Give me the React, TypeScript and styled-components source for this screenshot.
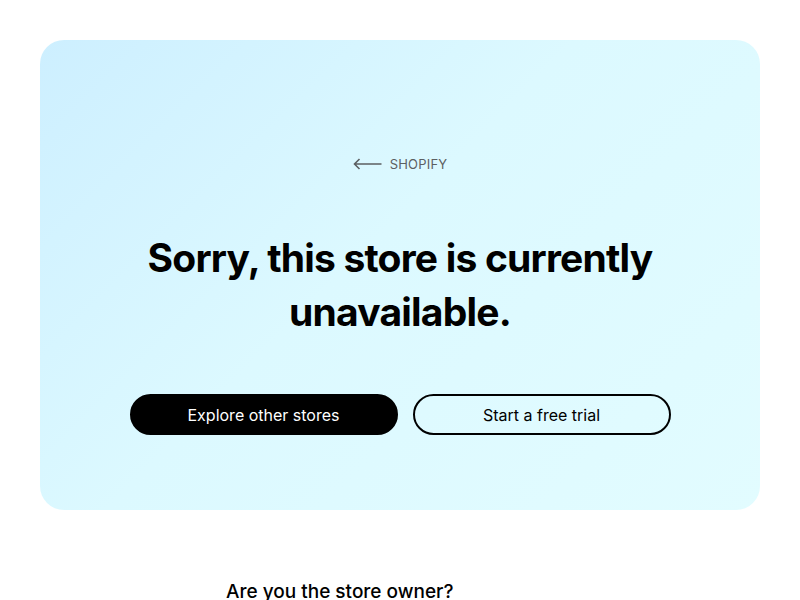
import styled, { createGlobalStyle } from 'styled-components';

const GlobalStyle = createGlobalStyle`
	body {
		margin: 0;
		background: #ffffff;
		font-family: Inter, 'Noto Sans', sans-serif;
		color: #000000;
	}
`;

const ArrowLeft = () => (
	<svg width="29" height="12" viewBox="0 0 29 12" fill="none">
		<path d="M28.5 6H1.5M6.5 1L1.5 6l5 5" stroke="#5c5f62" strokeWidth="1.6" />
	</svg>
);

const App = () => {
	return (
		<Page>
			<GlobalStyle />
			<Card>
				<BackLink href="#">
					<ArrowLeft />
					<span>Shopify</span>
				</BackLink>
				<Heading>
					Sorry, this store is currently
					<br />
					unavailable.
				</Heading>
				<ButtonRow>
					<Button $primary>Explore other stores</Button>
					<Button>Start a free trial</Button>
				</ButtonRow>
			</Card>
			<OwnerSection>
				<OwnerTitle>Are you the store owner?</OwnerTitle>
			</OwnerSection>
		</Page>
	);
};

const Page = styled.main`
	padding: 40px 40px 0;
`;

const Card = styled.section`
	display: flex;
	flex-direction: column;
	align-items: center;
	height: 470px;
	box-sizing: border-box;
	padding-top: 115px;
	border-radius: 24px;
	background: linear-gradient(135deg, #cdefff 0%, #dcf9ff 45%, #e2fcff 100%);
`;

const BackLink = styled.a`
	display: flex;
	align-items: center;
	gap: 8px;
	height: 18px;
	color: #5c5f62;
	font-size: 13px;
	line-height: 18px;
	text-transform: uppercase;
	text-decoration: none;
	letter-spacing: 0.2px;
`;

const Heading = styled.h1`
	margin: 58px 0 0;
	font-size: 39px;
	line-height: 54px;
	font-weight: 700;
	letter-spacing: -0.8px;
	text-align: center;
`;

const ButtonRow = styled.div`
	display: flex;
	gap: 15px;
	margin-top: 55px;
`;

const Button = styled.button<{ $primary?: boolean }>`
	width: ${(props) => (props.$primary ? '268px' : '258px')};
	height: 41px;
	border-radius: 21px;
	border: 2px solid #000000;
	background: ${(props) => (props.$primary ? '#000000' : 'transparent')};
	color: ${(props) => (props.$primary ? '#ffffff' : '#000000')};
	font-family: Inter, 'Noto Sans', sans-serif;
	font-size: 16px;
	cursor: pointer;
`;

const OwnerSection = styled.section`
	width: 348px;
	margin: 68px auto 0;
`;

const OwnerTitle = styled.h2`
	margin: 0;
	font-size: 19px;
	line-height: 28px;
	font-weight: 500;
`;

export default App;
